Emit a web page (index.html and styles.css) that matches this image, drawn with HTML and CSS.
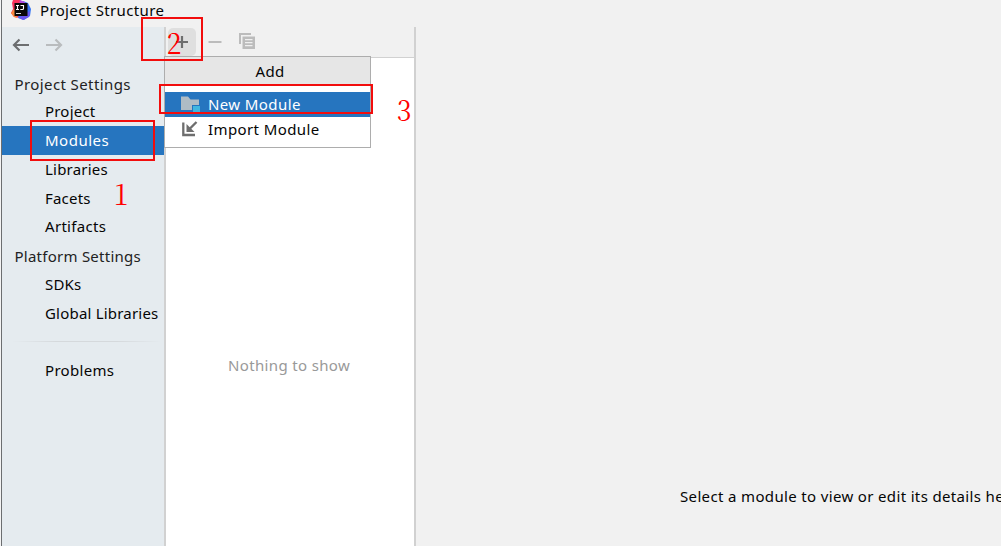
FILE: index.html
```html
<!DOCTYPE html>
<html lang="en">
<head>
<meta charset="utf-8">
<title>Project Structure</title>
<link rel="stylesheet" href="styles.css">
</head>
<body>
<div class="screen">
  <div class="backdrop"></div>
  <div class="window">
    <header class="titlebar">
      <svg class="logo" width="20" height="20" viewBox="0 0 20 20">
        <path d="M1 3 2 0 9 0 12 3 9 18 3 17 0 13 2 9z" fill="#f9345d"/>
        <path d="M0 13 4 8 6 18 3 17z" fill="#f98a3b"/>
        <path d="M12 1 17 3 20 9 19 16 13 20 7 18z" fill="#3575f4"/>
        <path d="M9 0 14 2 14 5 8 5z" fill="#b14be0"/>
        <path d="M15 13 19 11 18 17 12 20 8 18z" fill="#6a55ee"/>
        <rect x="3.500" y="3" width="13" height="13" fill="#080808"/>
        <path d="M5 5.500h3M6.500 5.500v4M5 9.500h3M9.500 5.500h3v3q0 1-1.200 1h-2" fill="none" stroke="#fff" stroke-width="1.100"/>
        <path d="M5 13.500h5" stroke="#ddd" stroke-width="1"/>
      </svg>
      <span class="title">Project Structure</span>
    </header>
    <div class="content">
      <nav class="sidebar">
        <div class="history">
          <svg width="18" height="14" viewBox="0 0 18 14"><path d="M17 7H2M7.500 1.500 2 7l5.500 5.500" fill="none" stroke="#6c6e70" stroke-width="2.200"/></svg>
          <svg width="18" height="14" viewBox="0 0 18 14"><path d="M1 7h15M10.500 1.500 16 7l-5.500 5.500" fill="none" stroke="#b9bcbe" stroke-width="2.200"/></svg>
        </div>
        <div class="group">Project Settings</div>
        <div class="item first">Project</div>
        <div class="item selected">Modules</div>
        <div class="item">Libraries</div>
        <div class="item">Facets</div>
        <div class="item artifacts">Artifacts</div>
        <div class="group platform">Platform Settings</div>
        <div class="item">SDKs</div>
        <div class="item">Global Libraries</div>
        <div class="rule"></div>
        <div class="item problems">Problems</div>
      </nav>
      <section class="modules">
        <div class="toolbar">
          <span class="tool active"><svg width="14" height="14" viewBox="0 0 14 14"><path d="M1 7h12M7 1v12" stroke="#6e6e6e" stroke-width="2.200"/></svg></span>
          <svg class="minus" width="14" height="14" viewBox="0 0 14 14"><path d="M0.500 7h13" stroke="#bcbcbc" stroke-width="2"/></svg>
          <svg class="copy" width="16" height="18" viewBox="0 0 16 18"><path d="M1 12V2h11" fill="none" stroke="#bcbcbc" stroke-width="2"/><path d="M3.500 4.500H16V17H3.500z" fill="#bcbcbc"/><path d="M6 7.700h7.500M6 10.700h7.500M6 13.700h7.500" stroke="#f0f0f0" stroke-width="1.200"/></svg>
        </div>
        <div class="list">Nothing to show</div>
      </section>
      <main class="details">Select a module to view or edit its details here</main>
    </div>
  </div>

  <div class="popup">
    <div class="popup-title">Add</div>
    <div class="option highlighted">
      <svg width="20" height="17" viewBox="0 0 20 17"><path d="M0 .5h7l2.500 3H18V9h-7v5H0z" fill="#afbcc5"/><path d="M12 10h7v6h-7z" fill="#40b6e0"/></svg>
      <span>New Module</span>
    </div>
    <div class="option">
      <svg width="20" height="17" viewBox="0 0 20 17"><path d="M2.300 1.500v12.500H14M15.500 1 8.500 8" fill="none" stroke="#6e6e6e" stroke-width="2.300"/><path d="M5.500 3v8h8z" fill="#6e6e6e"/></svg>
      <span>Import Module</span>
    </div>
  </div>

  <div class="mark mark-modules"></div>
  <div class="mark mark-add"></div>
  <div class="mark mark-new"></div>
  <span class="step step-one">1</span>
  <span class="step step-two">2</span>
  <span class="step step-three">3</span>
</div>
</body>
</html>
```
FILE: styles.css
```css
* { box-sizing: border-box; }
body { margin: 0; overflow: hidden; }
.screen {
  position: relative;
  display: flex;
  width: 1001px;
  height: 546px;
  overflow: hidden;
  background: #f1f1f1;
  color: #050505;
  font: 15px/20px "Noto Sans", "Open Sans", sans-serif;
  letter-spacing: 0.35px;
  white-space: nowrap;
}
.backdrop { width: 1px; background: #f4f4f4; }
.window {
  flex: 1;
  min-width: 0;
  display: flex;
  flex-direction: column;
  border-left: 1px solid #6c6e70;
}
.titlebar { display: flex; height: 27px; padding-left: 9px; }
.logo { margin-right: 9px; }
.content { flex: 1; display: flex; min-height: 0; }
.sidebar { width: 162px; background: #e5ebef; }
.history { display: flex; gap: 15px; height: 47px; padding: 11px 0 0 10px; }
.group { height: 23px; padding-left: 12.5px; color: #222; letter-spacing: 0.4px; }
.item { height: 29px; padding-left: 43px; line-height: 29px; letter-spacing: 0.2px; }
.item.first { line-height: 28px; }
.item.selected { background: #2675bf; color: #fff; letter-spacing: 0.5px; }
.item.artifacts, .item.problems { line-height: 27px; letter-spacing: 0.3px; }
.group.platform { height: 28px; line-height: 28px; letter-spacing: 0.25px; }
.rule { height: 1px; margin: 13px 2px 15px 10px; background: linear-gradient(90deg, #e5ebef, #d5d9dc 30%, #d5d9dc 70%, #e5ebef); }
.modules { width: 252px; display: flex; flex-direction: column; border: solid #d1d1d1; border-width: 0 2px; }
.toolbar { display: flex; height: 31px; padding-left: 2px; border-bottom: 1px solid #d1d1d1; }
.tool { display: flex; align-items: center; justify-content: center; width: 28px; height: 28px; margin-top: 1px; border-radius: 5px; background: #dfdfdf; }
.minus { margin: 8px 0 0 12px; }
.copy { margin: 5px 0 0 17px; }
.list { flex: 1; padding: 297px 0 0 62px; background: #fff; color: #999; }
.details { flex: 1; min-width: 0; padding: 459px 0 0 264px; overflow: hidden; }
.popup { position: absolute; left: 164px; top: 56px; width: 207px; height: 92px; border: 1px solid #adadad; background: #fff; }
.popup-title { height: 29px; margin-bottom: 6px; padding-left: 5px; line-height: 29px; text-align: center; background: #e6e6e6; }
.option { display: flex; height: 25px; padding: 4px 0 0 16px; line-height: 17px; gap: 7px; letter-spacing: 0.4px; }
.highlighted { background: #2675bf; color: #fff; }
.mark { position: absolute; border: 2px solid #f20d0d; }
.mark-modules { left: 30px; top: 120px; width: 125px; height: 41px; }
.mark-add { left: 141px; top: 17px; width: 62px; height: 44px; }
.mark-new { left: 159px; top: 84px; width: 214px; height: 30px; }
.step { position: absolute; color: #f00; font: 29px/30px "Noto Serif CJK SC", "Liberation Serif", serif; transform: scaleX(0.92); }
.step-one { left: 113px; top: 178px; }
.step-two { left: 166px; top: 27px; }
.step-three { left: 396px; top: 94px; }
```
